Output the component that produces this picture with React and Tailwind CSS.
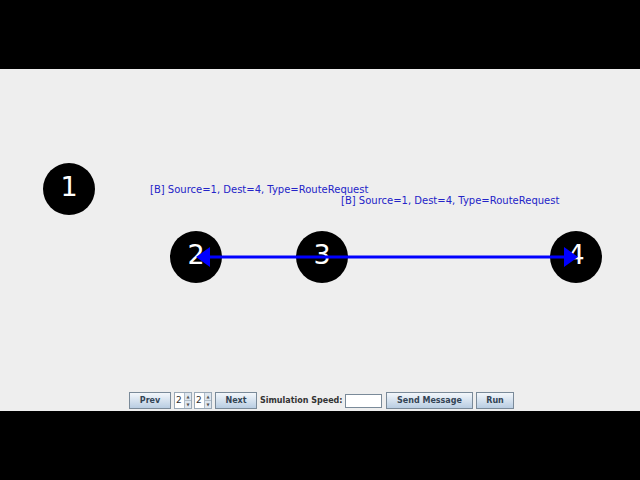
import React from "react";

// Nodos del grafo: posición en el lienzo
const nodes = [
    { id: 1, x: 43, y: 94 },
    { id: 2, x: 170, y: 162 },
    { id: 3, x: 296, y: 162 },
    { id: 4, x: 550, y: 162 },
];

const btn = "h-[17px] shrink-0 border border-[#7a8a99] bg-gradient-to-b from-[#f3f7fb] to-[#b9cde2] text-[8px] font-bold text-[#334455] leading-none flex items-center justify-center";

const Spinner = ({ value }) => (
    <div className="flex h-[17px] w-[18px] shrink-0 border border-[#9aa8b6] bg-white">
        <div className="flex-1 text-[9px] leading-[15px] pl-[1px] text-[#333]">{value}</div>
        <div className="flex w-[7px] flex-col border-l border-[#b0bcc8] bg-[#dfe7ef]">
            <div className="flex flex-1 items-center justify-center border-b border-[#b0bcc8] text-[4px] text-[#555]">▲</div>
            <div className="flex flex-1 items-center justify-center text-[4px] text-[#555]">▼</div>
        </div>
    </div>
);

export default function App() {
    return (
        <div className="flex h-[480px] w-[640px] flex-col bg-black font-['DejaVu_Sans',sans-serif]">
            <div className="h-[69px]" />

            <div className="flex h-[342px] flex-col bg-[#eeeeee]">
                {/* Lienzo de simulación */}
                <div className="relative flex-1">
                    {nodes.map((n) => (
                        <div
                            key={n.id}
                            className="absolute flex h-[52px] w-[52px] items-center justify-center rounded-full bg-black pb-[6px] text-[27px] leading-none text-white"
                            style={{ left: n.x, top: n.y }}
                        >
                            {n.id}
                        </div>
                    ))}

                    <svg className="absolute left-0 top-0" width="640" height="320">
                        <line x1="205" y1="188" x2="568" y2="188" stroke="#0000ff" strokeWidth="3" />
                        <polygon points="196,188 210,178 210,198" fill="#0000ff" />
                        <polygon points="578,188 564,178 564,198" fill="#0000ff" />
                    </svg>

                    <div className="absolute left-[150px] top-[115px] text-[10px] leading-[12px] text-[#2424c8] whitespace-nowrap">
                        [B] Source=1, Dest=4, Type=RouteRequest
                    </div>
                    <div className="absolute left-[341px] top-[126px] text-[10px] leading-[12px] text-[#2424c8] whitespace-nowrap">
                        [B] Source=1, Dest=4, Type=RouteRequest
                    </div>
                </div>

                {/* Controles */}
                <div className="flex items-center pb-[2px] pl-[129px]">
                    <button className={`${btn} w-[42px]`}>Prev</button>
                    <div className="ml-[3px]"><Spinner value="2" /></div>
                    <div className="ml-[2px]"><Spinner value="2" /></div>
                    <button className={`${btn} ml-[3px] w-[42px]`}>Next</button>
                    <span className="ml-[3px] w-[82px] shrink-0 whitespace-nowrap text-[8px] font-bold text-[#333]">Simulation Speed:</span>
                    <div className="ml-[3px] h-[14px] w-[37px] shrink-0 border border-[#7a8a99] bg-white" />
                    <button className={`${btn} ml-[4px] w-[87px]`}>Send Message</button>
                    <button className={`${btn} ml-[3px] w-[38px]`}>Run</button>
                </div>
            </div>

            <div className="flex-1" />
        </div>
    );
}
